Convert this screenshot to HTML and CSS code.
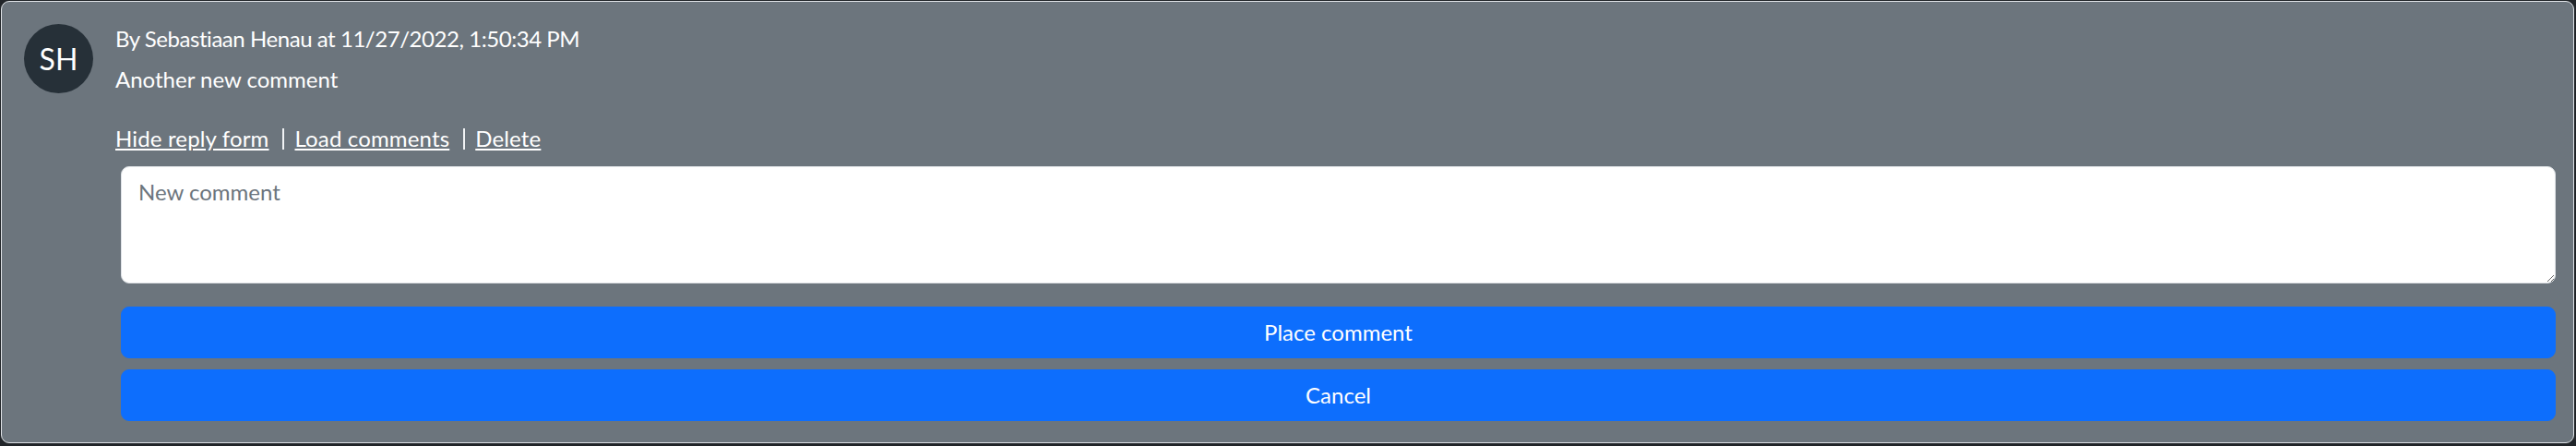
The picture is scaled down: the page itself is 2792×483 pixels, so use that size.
FILE: index.html
```html
<!DOCTYPE html>
<html lang="en">
<head>
<meta charset="utf-8">
<title>Comment</title>
<link rel="stylesheet" href="styles.css">
</head>
<body>
<div class="card">
  <div class="avatar">SH</div>
  <div class="content">
    <div class="meta">By Sebastiaan Henau at 11/27/2022, 1:50:34 PM</div>
    <div class="text">Another new comment</div>
    <div class="actions">
      <a href="#" class="link">Hide reply form</a><span class="sep"></span><a href="#" class="link">Load comments</a><span class="sep"></span><a href="#" class="link">Delete</a>
    </div>
    <form class="reply">
      <textarea class="input" rows="3" placeholder="New comment"></textarea>
      <button type="button" class="btn btn-first">Place comment</button>
      <button type="button" class="btn">Cancel</button>
    </form>
  </div>
</div>
</body>
</html>
```
FILE: styles.css
```css
html, body {
  margin: 0;
  background: #212529;
}
body {
  padding: 1px 2px 2px 1px;
  font-family: "Lato", "Noto Sans", sans-serif;
  font-size: 24px;
  line-height: 36px;
  color: #fff;
}
.card {
  display: flex;
  gap: 24px;
  background: #6c757d;
  border: 1px solid #dee2e6;
  border-radius: 9px;
  padding: 24px 19px 23px 24px;
}
.avatar {
  flex: none;
  width: 75px;
  height: 75px;
  border-radius: 50%;
  background: #263038;
  color: #fff;
  font-size: 32px;
  display: flex;
  align-items: center;
  justify-content: center;
}
.content {
  flex: 1;
  min-width: 0;
}
.meta {
  margin-top: -2px;
  letter-spacing: -0.45px;
}
.text {
  margin-top: 8px;
}
.actions {
  margin-top: 28px;
  display: flex;
  align-items: center;
  letter-spacing: 0.15px;
}
.link {
  color: #fff;
  text-decoration: underline;
}
.sep {
  display: inline-block;
  width: 0;
  height: 23px;
  border-left: 2px solid #f1f3f5;
  margin: 0 11px 0 15px;
}
.reply {
  margin: 12px 0 0 6px;
  display: flex;
  flex-direction: column;
}
.input {
  box-sizing: border-box;
  width: 100%;
  height: 127px;
  padding: 9px 18px;
  border: 1px solid #dee2e6;
  border-radius: 9px;
  background: #fff;
  color: #212529;
  font-family: inherit;
  font-size: 24px;
  line-height: 36px;
  margin: 0;
}
.input::placeholder {
  color: #6c757d;
}
.btn {
  box-sizing: border-box;
  width: 100%;
  height: 56px;
  margin-top: 12px;
  padding: 9px 18px;
  border: 1px solid #0d6efd;
  border-radius: 9px;
  background: #0d6efd;
  color: #fff;
  font-family: inherit;
  font-size: 24px;
  line-height: 36px;
}
.btn-first {
  margin-top: 25px;
}
```
